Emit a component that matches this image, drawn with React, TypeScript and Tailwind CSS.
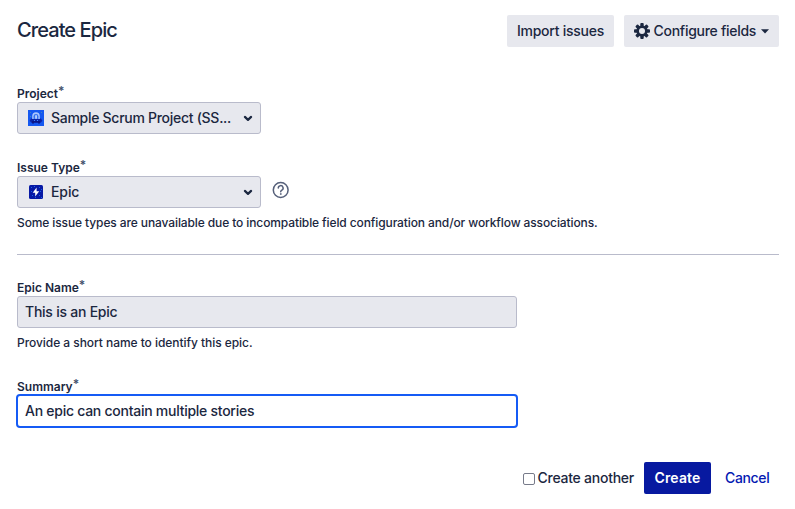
import type { ReactNode } from "react";

function Label({ children, tracking }: { children: ReactNode; tracking: string }) {
  return (
    <div className="flex h-4 items-start text-[12px] leading-4 font-semibold">
      <span className={tracking}>{children}</span>
      <span className="-mt-[3px] text-[12px] leading-4 font-semibold text-[#44506b]">*</span>
    </div>
  );
}

function Chevron() {
  return (
    <svg width="10" height="7" viewBox="0 0 10 7" fill="none" stroke="#1b2740" strokeWidth="2.2" strokeLinecap="round" strokeLinejoin="round">
      <path d="M1.9 1.9 5 4.9 8.1 1.9" />
    </svg>
  );
}

function Gear() {
  return (
    <svg width="16" height="16" viewBox="-8 -8 16 16" fill="#1b2740">
      {[0, 45, 90, 135].map((angle) => (
        <rect key={angle} x="-1.7" y="-8" width="3.4" height="16" rx="0.9" transform={`rotate(${angle})`} />
      ))}
      <circle r="5.6" />
      <circle r="3" fill="#e7e8ee" />
    </svg>
  );
}

function ProjectAvatar() {
  return (
    <svg width="16" height="16" viewBox="0 0 16 16">
      <rect width="16" height="16" fill="#1558f0" />
      <path d="M3 8.5h10l1.3 2.3-1.6 1.9H3.3l-1.6-1.9z" fill="#0a24a8" />
      <path d="M4 11h8v2.5h-2V12.5H6v1H4z" fill="#0a1688" />
      <path d="M4.2 9V6a3.8 3.8 0 0 1 7.6 0v3z" fill="#a9c5fb" />
      <path d="M5.6 9V6.3a2.4 2.4 0 0 1 4.8 0V9z" fill="#3472ef" />
      <path d="M7.3 5.2h1.5v3.5H7.3z" fill="#dbe7ff" />
      <path d="M6 10h1v1H6zM9 10h1v1H9z" fill="#4387fb" />
      <path d="M2 2h1v1H2zM13 2h1v1h-1zM2 6h1v1H2z" fill="#3c8aba" />
    </svg>
  );
}

function EpicIcon() {
  return (
    <svg width="14" height="14" viewBox="0 0 14 14">
      <rect width="14" height="14" rx="1.5" fill="#0719a5" />
      <path d="M2 2h1v1H2zM5 1h1v1H5zM10 2h1v1h-1zM2 6h1v1H2zM3 10h1v1H3zM11 6h1v1h-1zM10 10h1v1h-1zM6 12h1v1H6zM12 12h1v1h-1zM12 4h1v1h-1z" fill="#1760e8" />
      <path d="M7.6 2.4 3.7 7.7h2.5v3.9l4-5.3H7.6z" fill="#fff" />
    </svg>
  );
}

function HelpIcon() {
  return (
    <svg width="18" height="18" viewBox="0 0 18 18" fill="none" stroke="#56607a" strokeWidth="1.5" strokeLinecap="round">
      <circle cx="8.7" cy="9" r="7.4" />
      <path d="M6.3 7.1a2.4 2.4 0 1 1 3.6 2c-.9.6-1.2.9-1.2 1.7" />
      <circle cx="8.7" cy="13" r=".45" fill="#56607a" strokeWidth=".8" />
    </svg>
  );
}

function Select({ icon, children }: { icon: ReactNode; children: ReactNode }) {
  return (
    <div className="flex h-8 w-[244px] items-center rounded-[3px] border border-[#b9bbcb] bg-[#e7e8ee] pr-[7px] pl-[10px]">
      <span className="flex w-4 justify-center">{icon}</span>
      <span className="ml-[7px] flex-1 whitespace-nowrap">{children}</span>
      <Chevron />
    </div>
  );
}

export default function App() {
  return (
    <main className="h-[509px] w-[795px] bg-white pr-4 pl-[17px] font-['Inter','Liberation_Sans',sans-serif] text-[14px] leading-5 font-medium text-[#1b2740]">
      <header className="flex h-[47px] items-end justify-between">
        <h1 className="mb-1 text-[20px] leading-[26px] font-medium tracking-[-0.92px]">Create Epic</h1>
        <div className="flex gap-[10px]">
          <button className="h-8 w-[107px] rounded-[2px] bg-[#e7e8ee] whitespace-nowrap">
            <span className="tracking-[-0.25px]">Import issues</span>
          </button>
          <button className="flex h-8 w-[155px] items-center rounded-[2px] bg-[#e7e8ee] pl-[10px] whitespace-nowrap">
            <Gear />
            <span className="ml-[3.5px] tracking-[-0.28px]">Configure fields</span>
            <svg className="ml-[5px]" width="8" height="5" viewBox="0 0 8 5" fill="#1b2740"><path d="M0 .2h8L4 4.5z" /></svg>
          </button>
        </div>
      </header>

      <section className="pt-[39px]">
        <Label tracking="tracking-[0px]">Project</Label>
        <Select icon={<ProjectAvatar />}><span className="tracking-[-0.28px]">Sample Scrum Project (SS...</span></Select>
      </section>

      <section className="pt-[26px]">
        <Label tracking="tracking-[0px]">Issue Type</Label>
        <div className="flex items-center gap-[11px]">
          <Select icon={<EpicIcon />}><span className="tracking-[-0.1px]">Epic</span></Select>
          <span className="-mt-1"><HelpIcon /></span>
        </div>
        <p className="mt-[7px] text-[12px] leading-4"><span className="tracking-[-0.11px]">Some issue types are unavailable due to incompatible field configuration and/or workflow associations.</span></p>
      </section>

      <hr className="mt-[23px] border-[#b9bbcb]" />

      <section className="pt-[25px]">
        <Label tracking="tracking-[0px]">Epic Name</Label>
        <div className="flex h-8 w-[500px] items-center rounded-[3px] border border-[#b9bbcb] bg-[#e7e8ee] px-[7px]"><span className="tracking-[-0.24px]">This is an Epic</span></div>
        <p className="mt-[7px] text-[12px] leading-4"><span className="tracking-[-0.05px]">Provide a short name to identify this epic.</span></p>
      </section>

      <section className="pt-[28px]">
        <Label tracking="tracking-[0px]">Summary</Label>
        <div className="-mt-px -ml-px flex h-[34px] w-[502px] items-center rounded-[4px] border-2 border-[#155bf5] bg-white px-[7px]"><span className="tracking-[-0.26px]">An epic can contain multiple stories</span></div>
      </section>

      <footer className="flex items-center justify-end pt-[34px] pr-[10px]">
        <span className="mt-0.5 h-3 w-3 rounded-[2px] border border-[#777b8a] bg-white" />
        <span className="ml-[3px] tracking-[-0.25px]">Create another</span>
        <button className="ml-[10px] h-8 w-[67px] rounded-[2px] bg-[#0719a0] font-semibold text-white"><span className="tracking-[0.15px]">Create</span></button>
        <a className="ml-[14px] w-11 whitespace-nowrap text-[#0419b2]"><span className="tracking-[-0.35px]">Cancel</span></a>
      </footer>
    </main>
  );
}
